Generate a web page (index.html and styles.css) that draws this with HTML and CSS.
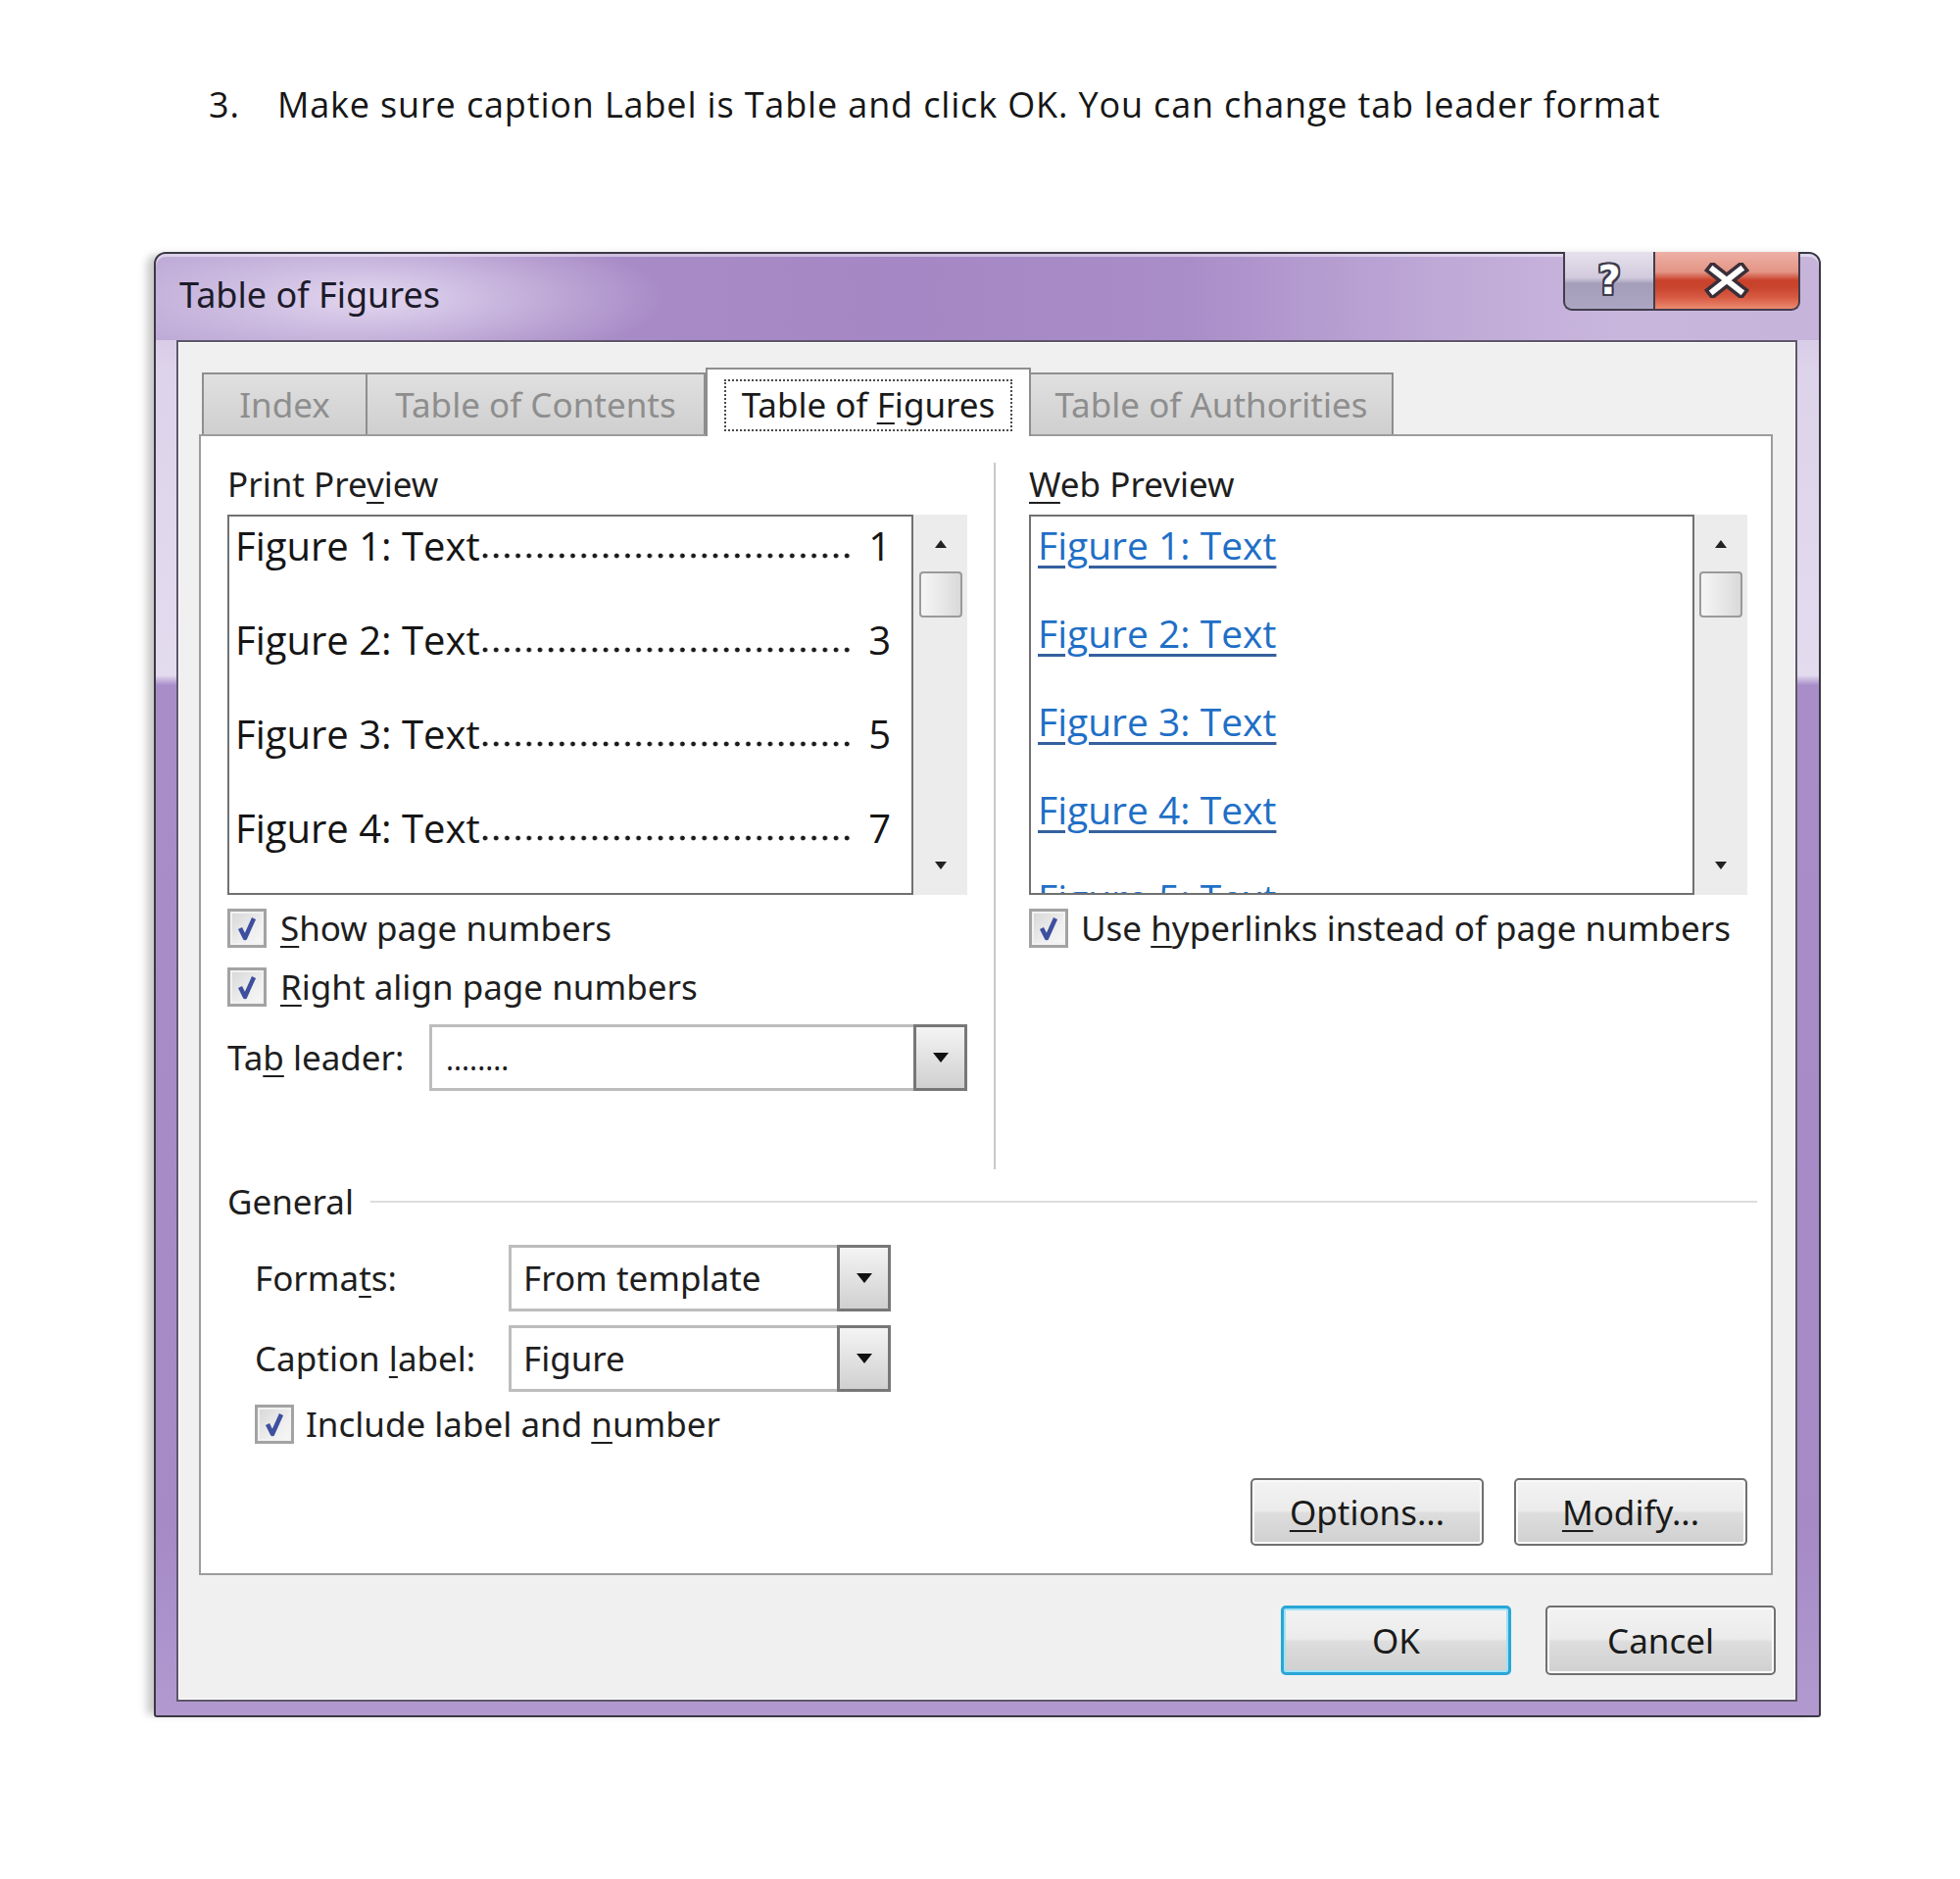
FILE: index.html
```html
<!DOCTYPE html>
<html>
<head>
<meta charset="utf-8">
<title>Table of Figures</title>
<link rel="stylesheet" href="styles.css">
</head>
<body>
<p class="step"><span class="num">3.</span><span>Make sure caption Label is Table and click OK. You can change tab leader format</span></p>

<div class="frame">
  <div class="titlebar">
    <div class="title">Table of Figures</div>
    <div class="tb-buttons">
      <div class="tb-help">?</div>
      <div class="tb-close">
        <svg width="46" height="36" viewBox="0 0 46 36">
          <path d="M9 7 L37 29 M37 7 L9 29" stroke="#3a2f38" stroke-width="13" stroke-linecap="square"/>
          <path d="M9 7 L37 29 M37 7 L9 29" stroke="#ffffff" stroke-width="6" stroke-linecap="square"/>
        </svg>
      </div>
    </div>
  </div>

  <div class="client">
    <div class="tabs">
      <div class="tab t-index">Index</div>
      <div class="tab t-toc">Table of Contents</div>
      <div class="tab sel"><span class="focus">Table of <u>F</u>igures</span></div>
      <div class="tab t-toa">Table of Authorities</div>
    </div>

    <div class="panel">
      <div class="top">
        <div class="col left">
          <div class="lbl">Print Pre<u>v</u>iew</div>
          <div class="preview">
            <div class="list print">
              <div class="entry"><span>Figure 1: Text</span><span class="dots"></span><span>1</span></div>
              <div class="entry"><span>Figure 2: Text</span><span class="dots"></span><span>3</span></div>
              <div class="entry"><span>Figure 3: Text</span><span class="dots"></span><span>5</span></div>
              <div class="entry"><span>Figure 4: Text</span><span class="dots"></span><span>7</span></div>
            </div>
            <div class="scroll">
              <svg class="arr-up" width="14" height="10" viewBox="0 0 14 10"><polygon points="7,1 13,9 1,9" fill="#222"/></svg>
              <div class="thumb"></div>
              <div class="spacer"></div>
              <svg class="arr-dn" width="14" height="10" viewBox="0 0 14 10"><polygon points="1,1 13,1 7,9" fill="#222"/></svg>
            </div>
          </div>
          <div class="check first">
            <span class="cb"><svg width="30" height="30" viewBox="0 0 30 30"><path d="M8 15 L13 25 L22 5" fill="none" stroke="#3d4f9e" stroke-width="4.5" stroke-linejoin="round"/></svg></span>
            <span><u>S</u>how page numbers</span>
          </div>
          <div class="check second">
            <span class="cb"><svg width="30" height="30" viewBox="0 0 30 30"><path d="M8 15 L13 25 L22 5" fill="none" stroke="#3d4f9e" stroke-width="4.5" stroke-linejoin="round"/></svg></span>
            <span><u>R</u>ight align page numbers</span>
          </div>
          <div class="leader">
            <span class="leader-lbl">Ta<u>b</u> leader:</span>
            <div class="combo c-leader">
              <span class="val dotsval">........</span>
              <span class="arrow"><svg width="18" height="12" viewBox="0 0 18 12"><polygon points="1,1 17,1 9,11" fill="#111"/></svg></span>
            </div>
          </div>
        </div>

        <div class="divider"></div>

        <div class="col right">
          <div class="lbl"><u>W</u>eb Preview</div>
          <div class="preview">
            <div class="list web">
              <div class="link">Figure 1: Text</div>
              <div class="link">Figure 2: Text</div>
              <div class="link">Figure 3: Text</div>
              <div class="link">Figure 4: Text</div>
              <div class="link">Figure 5: Text</div>
            </div>
            <div class="scroll">
              <svg class="arr-up" width="14" height="10" viewBox="0 0 14 10"><polygon points="7,1 13,9 1,9" fill="#222"/></svg>
              <div class="thumb"></div>
              <div class="spacer"></div>
              <svg class="arr-dn" width="14" height="10" viewBox="0 0 14 10"><polygon points="1,1 13,1 7,9" fill="#222"/></svg>
            </div>
          </div>
          <div class="check first">
            <span class="cb"><svg width="30" height="30" viewBox="0 0 30 30"><path d="M8 15 L13 25 L22 5" fill="none" stroke="#3d4f9e" stroke-width="4.5" stroke-linejoin="round"/></svg></span>
            <span>Use <u>h</u>yperlinks instead of page numbers</span>
          </div>
        </div>
      </div>

      <div class="ghead"><span>General</span><span class="gline"></span></div>

      <div class="frow f-formats">
        <span class="flbl">Forma<u>t</u>s:</span>
        <div class="combo c-small">
          <span class="val">From template</span>
          <span class="arrow"><svg width="18" height="12" viewBox="0 0 18 12"><polygon points="1,1 17,1 9,11" fill="#111"/></svg></span>
        </div>
      </div>
      <div class="frow f-caption">
        <span class="flbl">Caption <u>l</u>abel:</span>
        <div class="combo c-small">
          <span class="val">Figure</span>
          <span class="arrow"><svg width="18" height="12" viewBox="0 0 18 12"><polygon points="1,1 17,1 9,11" fill="#111"/></svg></span>
        </div>
      </div>
      <div class="check include">
        <span class="cb"><svg width="30" height="30" viewBox="0 0 30 30"><path d="M8 15 L13 25 L22 5" fill="none" stroke="#3d4f9e" stroke-width="4.5" stroke-linejoin="round"/></svg></span>
        <span>Include label and <u>n</u>umber</span>
      </div>

      <div class="brow">
        <div class="btn"><span><u>O</u>ptions...</span></div>
        <div class="btn"><span><u>M</u>odify...</span></div>
      </div>
    </div>

    <div class="dbrow">
      <div class="btn dbtn ok">OK</div>
      <div class="btn dbtn">Cancel</div>
    </div>
  </div>
</div>
</body>
</html>
```

FILE: styles.css
```css
html, body {
  margin: 0;
  padding: 0;
  background: #ffffff;
}

body {
  width: 2000px;
  height: 1917px;
  font-family: "Noto Sans", "Open Sans", sans-serif;
  color: #1e1e1e;
  overflow: hidden;
}

u {
  text-decoration: underline;
  text-decoration-thickness: 2px;
  text-underline-offset: 5px;
}

.step {
  margin: 87px 0 0 213px;
  display: flex;
  font-family: "Open Sans", sans-serif;
  font-size: 36px;
  line-height: 40px;
  color: #161616;
  letter-spacing: 0.85px;
  white-space: nowrap;
}

.step .num {
  width: 70px;
}

/* ---------- window frame ---------- */
.frame {
  margin: 130px 0 0 157px;
  width: 1701px;
  height: 1495px;
  box-sizing: border-box;
  border: 2px solid #3b3846;
  border-radius: 12px 12px 3px 3px;
  padding: 0 22px 14px 21px;
  display: flex;
  flex-direction: column;
  background: linear-gradient(180deg,
      #cdbde0 0px,
      #ddd3ea 120px,
      #e3dbee 430px,
      #a98dc9 440px,
      #a58ac6 1300px,
      #b29acf 1493px);
  box-shadow: -10px 0 8px -3px rgba(0, 0, 0, 0.22);
}

.titlebar {
  height: 88px;
  margin: 0 -22px 0 -21px;
  padding: 0 19px 0 24px;
  display: flex;
  align-items: flex-start;
  justify-content: space-between;
  border-radius: 10px 10px 0 0;
  background:
    radial-gradient(ellipse 300px 75px at 220px 45px, rgba(232, 222, 244, 0.9), rgba(232, 222, 244, 0) 100%),
    linear-gradient(90deg, #bba6d4 0%, #a98dc7 20%, #a487c4 45%, #a98dc8 62%, #bda7d6 76%, #c9b6dd 88%, #c7b4db 100%);
  box-shadow: inset 0 3px 0 rgba(255, 255, 255, 0.45);
}

.title {
  margin-top: 20px;
  font-size: 36px;
  line-height: 44px;
  color: #1c1b2a;
}

.tb-buttons {
  display: flex;
  margin-top: -2px;
}

.tb-help {
  width: 92px;
  height: 60px;
  box-sizing: border-box;
  border: 2px solid #423d4d;
  border-top: none;
  border-right: none;
  border-radius: 0 0 0 9px;
  background: linear-gradient(180deg, #e6e1ed 0%, #d2cbdd 45%, #a49ebb 56%, #aca6c3 100%);
  display: flex;
  align-items: center;
  justify-content: center;
  font-family: "DejaVu Sans", sans-serif;
  font-weight: bold;
  font-size: 40px;
  line-height: 42px;
  color: #ffffff;
  text-shadow: 2px 0 0 #3e3b4c, -2px 0 0 #3e3b4c, 0 2px 0 #3e3b4c, 0 -2px 0 #3e3b4c,
    2px 2px 0 #3e3b4c, -2px -2px 0 #3e3b4c, 2px -2px 0 #3e3b4c, -2px 2px 0 #3e3b4c;
}

.tb-close {
  width: 150px;
  height: 60px;
  box-sizing: border-box;
  border: 2px solid #423d4d;
  border-top: none;
  border-radius: 0 0 9px 0;
  background: linear-gradient(180deg, #eeb0a6 0%, #e39585 35%, #c9412b 50%, #c9442d 62%, #d85a42 80%, #ec8a70 100%);
  display: flex;
  align-items: center;
  justify-content: center;
}

/* ---------- client area ---------- */
.client {
  flex: 1;
  background: #f0f0f0;
  border: 2px solid #5e566a;
  box-shadow: inset 0 0 0 1px #ffffff;
  padding: 26px 20px 0 21px;
  display: flex;
  flex-direction: column;
}

.tabs {
  display: flex;
  align-items: flex-end;
  height: 70px;
  margin: 0 0 -2px 3px;
}

.tab {
  position: relative;
  z-index: 1;
  box-sizing: border-box;
  height: 63px;
  margin-bottom: 2px;
  border: 2px solid #8e8e8e;
  border-bottom: none;
  background: linear-gradient(180deg, #e0e0e0 0%, #cfcfcf 100%);
  display: flex;
  align-items: center;
  justify-content: center;
  font-size: 35px;
  line-height: 44px;
  color: #8e8e8e;
}

.t-index { width: 169px; }
.t-toc { width: 345px; border-left: none; }
.t-toa { width: 370px; border-left: none; }

.tab.sel {
  width: 332px;
  height: 70px;
  margin-bottom: 0;
  background: #ffffff;
  color: #1a1a1a;
  align-items: flex-start;
  padding-top: 10px;
  z-index: 2;
}

.focus {
  border: 2px dotted #4a4a4a;
  padding: 1px 16px 2px 16px;
  line-height: 46px;
}

.panel {
  background: #ffffff;
  border: 2px solid #9c9c9c;
  padding: 27px 24px 28px 27px;
  margin-right: 3px;
}

.top {
  display: flex;
  height: 721px;
}

.col {
  display: flex;
  flex-direction: column;
}

.col.left { width: 759px; }
.col.right { width: 733px; margin-left: 34px; }

.divider {
  width: 2px;
  margin-left: 26px;
  background: #c9c9c9;
}

.lbl {
  font-size: 35px;
  line-height: 44px;
  height: 44px;
}

.preview {
  display: flex;
  height: 388px;
  margin-top: 9px;
}

.left .preview { width: 755px; }
.right .preview { width: 733px; }

.list {
  box-sizing: border-box;
  height: 388px;
  border: 2px solid #717171;
  background: #ffffff;
  overflow: hidden;
}

.list.print {
  width: 700px;
  padding: 0 21px 0 6px;
}

.list.web {
  width: 679px;
  padding: 0 0 0 7px;
}

.entry {
  display: flex;
  white-space: nowrap;
  font-family: "Open Sans", sans-serif;
  font-size: 40px;
  line-height: 60px;
  height: 60px;
  margin-bottom: 36px;
  color: #151515;
}

.entry .dots {
  flex: 1;
  margin: 0 14px 0 2px;
  height: 60px;
  background-image: radial-gradient(circle at 3px 3px, #1a1a1a 0, #1a1a1a 2px, rgba(26, 26, 26, 0) 2.8px);
  background-size: 11.2px 6px;
  background-repeat: repeat-x;
  background-position: 0 37px;
}

.link {
  font-family: "Open Sans", sans-serif;
  font-size: 39px;
  line-height: 58px;
  height: 58px;
  margin-bottom: 32px;
  color: #1f6fc6;
  white-space: nowrap;
  text-decoration: underline;
  text-decoration-thickness: 3px;
  text-underline-offset: 6px;
  text-decoration-color: #35609e;
}

.scroll {
  flex: 1;
  background: #ececec;
  display: flex;
  flex-direction: column;
  align-items: center;
}

.arr-up {
  margin-top: 25px;
  display: block;
}

.thumb {
  margin-top: 23px;
  width: 44px;
  height: 47px;
  box-sizing: border-box;
  border: 2px solid #9a9a9a;
  border-radius: 4px;
  background: linear-gradient(90deg, #f6f6f6 0%, #e8e8e8 50%, #d9d9d9 100%);
}

.spacer { flex: 1; }

.arr-dn {
  margin-bottom: 25px;
  display: block;
}

.check {
  display: flex;
  align-items: center;
  height: 40px;
  gap: 14px;
  font-size: 35px;
  line-height: 40px;
  white-space: nowrap;
}

.check.first { margin-top: 14px; }
.check.second { margin-top: 20px; }
.right .check { gap: 13px; }

.cb {
  width: 40px;
  height: 40px;
  flex: none;
  box-sizing: border-box;
  border: 3px solid #a3a3a3;
  background: linear-gradient(135deg, #d6d6d6 0%, #eeeeee 60%, #f8f8f8 100%);
  box-shadow: inset 0 0 0 2px #f2f2f2;
  display: flex;
  align-items: center;
  justify-content: center;
}

.leader {
  display: flex;
  align-items: center;
  height: 68px;
  margin-top: 18px;
}

.leader-lbl {
  width: 206px;
  font-size: 35px;
  line-height: 44px;
}

.combo {
  height: 68px;
  box-sizing: border-box;
  border: 3px solid #bdbdbd;
  background: #ffffff;
  display: flex;
  align-items: center;
}

.c-leader { width: 549px; }
.c-small { width: 390px; }

.combo .val {
  flex: 1;
  padding-left: 12px;
  font-size: 35px;
  line-height: 44px;
  white-space: nowrap;
}

.combo .dotsval {
  font-size: 30px;
  padding-left: 14px;
  padding-top: 4px;
}

.combo .arrow {
  width: 55px;
  align-self: stretch;
  margin: -3px -3px -3px 0;
  box-sizing: border-box;
  border: 3px solid #777777;
  background: linear-gradient(180deg, #f4f4f4 0%, #e2e2e2 50%, #d0d0d0 100%);
  display: flex;
  align-items: center;
  justify-content: center;
}

.ghead {
  display: flex;
  align-items: center;
  height: 44px;
  margin-top: 11px;
  font-size: 35px;
  line-height: 44px;
}

.gline {
  flex: 1;
  height: 2px;
  background: #dddddd;
  margin: 0 -10px 0 17px;
}

.frow {
  display: flex;
  align-items: center;
  height: 68px;
  padding-left: 28px;
}

.f-formats { margin-top: 22px; }
.f-caption { margin-top: 14px; }

.flbl {
  width: 259px;
  font-size: 35px;
  line-height: 44px;
}

.check.include {
  margin-top: 13px;
  margin-left: 28px;
  gap: 12px;
}

.brow {
  display: flex;
  justify-content: flex-end;
  gap: 31px;
  margin-top: 35px;
}

.btn {
  width: 238px;
  height: 69px;
  box-sizing: border-box;
  border: 2px solid #707070;
  border-radius: 5px;
  background: linear-gradient(180deg, #f3f3f3 0%, #ebebeb 48%, #dddddd 52%, #d0d0d0 100%);
  box-shadow: inset 0 0 0 2px #fbfbfb;
  display: flex;
  align-items: center;
  justify-content: center;
  font-size: 35px;
  line-height: 44px;
  color: #1a1a1a;
}

.dbrow {
  display: flex;
  justify-content: flex-end;
  gap: 35px;
  margin-top: 31px;
}

.dbtn {
  width: 235px;
  height: 71px;
}

.dbtn.ok {
  border: 3px solid #2aa6d6;
  box-shadow: inset 0 0 0 2px #9fe2f8;
}
```
